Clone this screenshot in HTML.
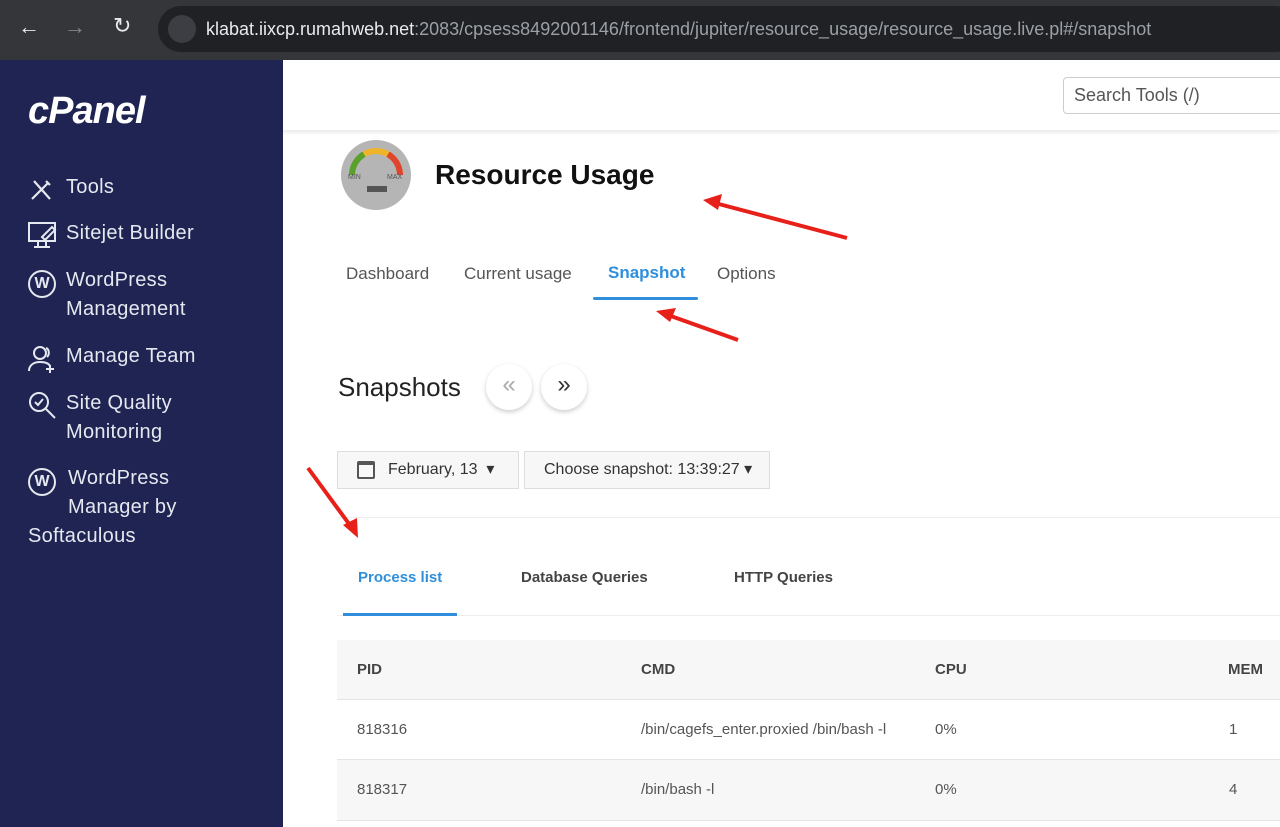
<!DOCTYPE html>
<html><head><meta charset="utf-8"><style>
*{box-sizing:border-box;margin:0;padding:0}
html,body{width:1280px;height:827px;overflow:hidden}
body{font-family:"Liberation Sans",sans-serif;background:#fff;position:relative}
.top{position:absolute;left:0;top:0;width:1280px;height:60px;background:#35363a}
.url{position:absolute;left:158px;top:6px;width:1140px;height:46px;border-radius:23px;background:#202124;color:#e8eaed;font-size:18px;line-height:46px;padding-left:48px}
.url .g{color:#9aa0a6}
.side{position:absolute;left:0;top:60px;width:283px;height:767px;background:#1f2452;color:#e6e8f0;font-size:20px}
.item{position:absolute;left:66px;line-height:29px;letter-spacing:.3px}
.ic{position:absolute;left:28px}
.hdr{position:absolute;left:283px;top:60px;width:997px;height:71px;background:#fff;box-shadow:0 2px 3px rgba(0,0,0,.08);border-bottom:1px solid #eee}
.search{position:absolute;left:780px;top:17px;width:240px;height:37px;border:1px solid #ccc;border-radius:4px;font-size:18px;color:#555;line-height:35px;padding-left:10px}
.abs{position:absolute}
.tab{position:absolute;top:264px;font-size:17px;color:#555}
.btn{position:absolute;top:451px;height:38px;border:1px solid #ddd;background:#f7f7f7;font-size:16px;color:#333;line-height:36px}
.circ{position:absolute;top:364px;width:46px;height:46px;border-radius:50%;background:#fff;box-shadow:0 2px 5px rgba(0,0,0,.2);font-size:24px;text-align:center;line-height:42px;color:#333}
.st{position:absolute;top:569px;font-size:15px;font-weight:bold;color:#444}
.row{position:absolute;left:337px;width:943px;height:60px;font-size:15px;color:#555;line-height:60px;border-bottom:1px solid #e4e4e4}
.row span{position:absolute}
</style></head><body>
<div class="top">
<div class="abs" style="left:18px;top:14px;color:#e8eaed;font-size:22px">←</div>
<div class="abs" style="left:64px;top:14px;color:#80868b;font-size:22px">→</div>
<div class="abs" style="left:113px;top:13px;color:#e8eaed;font-size:22px">↻</div>
<div class="url"><span class="abs" style="left:10px;top:9px;width:28px;height:28px;border-radius:50%;background:#3c3e43"></span>klabat.iixcp.rumahweb.net<span class="g">:2083/cpsess8492001146/frontend/jupiter/resource_usage/resource_usage.live.pl#/snapshot</span></div>
</div>
<div class="side">
<div class="abs" style="left:28px;top:30px;font-size:38px;font-weight:bold;font-style:italic;color:#fff;letter-spacing:-1px">cPanel</div>
<svg class="ic" style="top:117px" width="26" height="26" viewBox="0 0 26 26" fill="none" stroke="#e6e8f0" stroke-width="2.2"><path d="M4 22L20 6M6 4l16 18M18 4l4 4"/></svg><div class="item" style="top:113px">Tools</div>
<svg class="ic" style="top:161px" width="30" height="30" viewBox="0 0 30 30" fill="none" stroke="#e6e8f0" stroke-width="2"><rect x="1" y="2" width="26" height="18"/><path d="M10 20v5M18 20v5M6 26h16M14 16l10-10 3 3-10 10z"/></svg><div class="item" style="top:159px">Sitejet Builder</div>
<div class="ic" style="top:210px;width:28px;height:28px;border-radius:50%;border:2px solid #e6e8f0;font-size:16px;font-weight:bold;text-align:center;line-height:24px">W</div><div class="item" style="top:206px">WordPress<br>Management</div>
<svg class="ic" style="top:284px" width="30" height="30" viewBox="0 0 30 30" fill="none" stroke="#e6e8f0" stroke-width="2"><circle cx="12" cy="9" r="6"/><path d="M1 27c0-6 5-9 11-9s9 2 10 4M22 21v8M18 25h8M18 4c3 1 4 6 1 9"/></svg><div class="item" style="top:282px">Manage Team</div>
<svg class="ic" style="top:331px" width="30" height="30" viewBox="0 0 30 30" fill="none" stroke="#e6e8f0" stroke-width="2"><circle cx="11" cy="11" r="9"/><path d="M7 11l3 3 5-6M18 18l9 9"/></svg><div class="item" style="top:329px">Site Quality<br>Monitoring</div>
<div class="ic" style="top:408px;width:28px;height:28px;border-radius:50%;border:2px solid #e6e8f0;font-size:16px;font-weight:bold;text-align:center;line-height:24px">W</div><div class="item" style="top:404px;left:68px">WordPress<br>Manager by</div>
<div class="item" style="top:462px;left:28px">Softaculous</div>
</div>
<div class="hdr"><div class="search">Search Tools (/)</div></div>
<div class="abs" style="left:341px;top:140px;width:70px;height:70px;border-radius:50%;background:#b5b5b5;overflow:hidden">
<div class="abs" style="left:8px;top:8px;width:54px;height:54px;border-radius:50%;background:conic-gradient(from 270deg,#5aa02c 0 60deg,#f0b42a 60deg 120deg,#e0452b 120deg 180deg,transparent 180deg)"></div>
<div class="abs" style="left:14px;top:14px;width:42px;height:42px;border-radius:50%;background:#b5b5b5"></div>
<div class="abs" style="left:7px;top:34px;font-size:7px;color:#555">MIN</div><div class="abs" style="left:46px;top:34px;font-size:7px;color:#555">MAX</div>
<div class="abs" style="left:26px;top:46px;width:20px;height:6px;background:#555"></div>
</div>
<div class="abs" style="left:435px;top:159px;font-size:28px;font-weight:bold;color:#111">Resource Usage</div>
<div class="tab" style="left:346px">Dashboard</div>
<div class="tab" style="left:464px">Current usage</div>
<div class="tab" style="left:608px;top:263px;color:#2f8fdc;font-weight:bold">Snapshot</div>
<div class="abs" style="left:593px;top:297px;width:105px;height:3px;background:#2f8fdc;border-radius:2px"></div>
<div class="tab" style="left:717px">Options</div>
<div class="abs" style="left:338px;top:372px;font-size:26px;color:#222">Snapshots</div>
<div class="circ" style="left:486px;color:#aaa">«</div>
<div class="circ" style="left:541px">»</div>
<div class="btn" style="left:337px;width:182px;padding-left:50px">February, 13 &nbsp;▾<span class="abs" style="left:19px;top:9px;width:18px;height:18px;border:2px solid #555;border-top-width:4px;border-radius:2px"></span></div>
<div class="btn" style="left:524px;width:246px;padding-left:19px">Choose snapshot: 13:39:27 ▾</div>
<div class="abs" style="left:337px;top:517px;width:943px;height:1px;background:#eee"></div>
<div class="st" style="left:358px;color:#2f8fdc">Process list</div>
<div class="st" style="left:521px">Database Queries</div>
<div class="st" style="left:734px">HTTP Queries</div>
<div class="abs" style="left:337px;top:615px;width:943px;height:1px;background:#eee"></div>
<div class="abs" style="left:343px;top:613px;width:114px;height:3px;background:#2f8fdc"></div>
<div class="row" style="top:640px;background:#f7f7f7;font-weight:bold;color:#444"><span style="left:20px">PID</span><span style="left:304px">CMD</span><span style="left:598px">CPU</span><span style="left:891px">MEM</span></div>
<div class="row" style="top:700px;background:#fff"><span style="left:20px">818316</span><span style="left:304px">/bin/cagefs_enter.proxied /bin/bash -l</span><span style="left:598px">0%</span><span style="left:892px">1</span></div>
<div class="row" style="top:760px;background:#f7f7f7;height:61px"><span style="left:20px">818317</span><span style="left:304px">/bin/bash -l</span><span style="left:598px">0%</span><span style="left:892px">4</span></div>
<svg class="abs" style="left:0;top:0" width="1280" height="827">
<g stroke="#e8201a" stroke-width="4" fill="#e8201a">
<line x1="847" y1="238" x2="715" y2="203"/><polygon points="703,200 722,194 718,210" stroke="none"/>
<line x1="738" y1="340" x2="668" y2="315"/><polygon points="656,311 676,308 670,322" stroke="none"/>
<line x1="308" y1="468" x2="352" y2="528"/><polygon points="358,538 343,525 357,518" stroke="none"/>
</g></svg>
</body></html>
